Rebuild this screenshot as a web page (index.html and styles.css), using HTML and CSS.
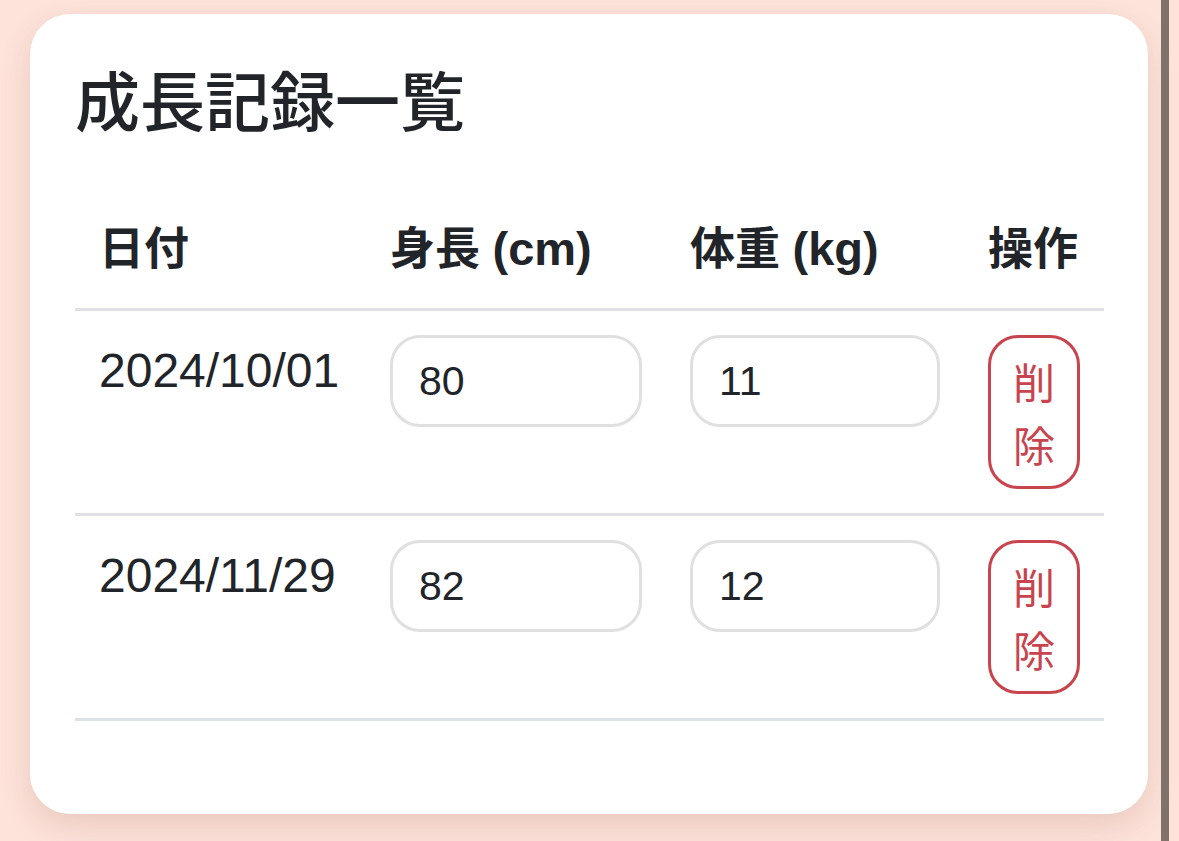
FILE: index.html
```html
<!DOCTYPE html>
<html lang="ja">
<head>
<meta charset="utf-8">
<title>成長記録一覧</title>
<link rel="stylesheet" href="styles.css">
</head>
<body>
<div class="page">
  <main class="card">
    <h2 class="title">成長記録一覧</h2>
    <table class="records">
      <colgroup>
        <col class="c-date"><col class="c-height"><col class="c-weight"><col class="c-op">
      </colgroup>
      <thead>
        <tr><th>日付</th><th>身長 <span class="unit">(cm)</span></th><th>体重 <span class="unit">(kg)</span></th><th>操作</th></tr>
      </thead>
      <tbody>
        <tr>
          <td class="date">2024/10/01</td>
          <td><input class="field" type="text" value="80"></td>
          <td><input class="field" type="text" value="11"></td>
          <td><button class="del" type="button">削除</button></td>
        </tr>
        <tr>
          <td class="date">2024/11/29</td>
          <td><input class="field" type="text" value="82"></td>
          <td><input class="field" type="text" value="12"></td>
          <td><button class="del" type="button">削除</button></td>
        </tr>
      </tbody>
    </table>
  </main>
  <div class="edge"></div>
</div>
</body>
</html>
```
FILE: styles.css
```css
html, body {
  margin: 0;
  padding: 0;
  height: 100%;
}
body {
  background: #fde3da;
  font-family: "Liberation Sans", "Noto Sans CJK JP", sans-serif;
  color: #212529;
  overflow: hidden;
}
.page {
  display: flex;
  align-items: flex-start;
  height: 100%;
  padding-left: 30px;
  box-sizing: border-box;
}
.card {
  margin-top: 14px;
  width: 1118px;
  height: 800px;
  box-sizing: border-box;
  padding: 45px;
  background: #ffffff;
  border-radius: 40px;
  box-shadow: 0 12px 30px rgba(150, 90, 70, 0.18);
}
.edge {
  width: 8px;
  height: 100%;
  margin-left: 13px;
  background: #7f726c;
  flex-shrink: 0;
}
.title {
  margin: 0 0 50px;
  font-family: "Noto Sans CJK JP", sans-serif;
  font-size: 65px;
  font-weight: 500;
  line-height: 1.2;
  color: #212529;
}
.records {
  width: 100%;
  border-collapse: collapse;
  table-layout: fixed;
}
.c-date { width: 291px; }
.c-height { width: 300px; }
.c-weight { width: 298px; }
.c-op { width: 140px; }
.records th,
.records td {
  padding: 24px;
  font-size: 48px;
  line-height: 1.5;
  text-align: left;
  vertical-align: top;
  border-bottom: 3px solid #dee2e6;
}
.records th {
  font-size: 45px;
  line-height: 72px;
  font-weight: 700;
  vertical-align: bottom;
  white-space: nowrap;
  padding-top: 26px;
  padding-bottom: 22px;
}
.unit {
  font-size: 47px;
}
.date {
  white-space: nowrap;
  padding-top: 29px;
  padding-left: 26px;
}
.field {
  display: block;
  width: 100%;
  box-sizing: border-box;
  margin: 0;
  padding: 12px 26px;
  font-family: "Liberation Sans", "Noto Sans CJK JP", sans-serif;
  font-size: 41px;
  line-height: 1.5;
  height: 92px;
  color: #212529;
  background: #ffffff;
  border: 3px solid #e0e0e0;
  border-radius: 30px;
  outline: none;
}
.del {
  display: block;
  width: min-content;
  margin: 0;
  padding: 11px 22px;
  font-family: "Noto Sans CJK JP", sans-serif;
  font-size: 42px;
  line-height: 1.5;
  color: #c8444e;
  background: #ffffff;
  border: 3px solid #c8444e;
  border-radius: 30px;
}
```
